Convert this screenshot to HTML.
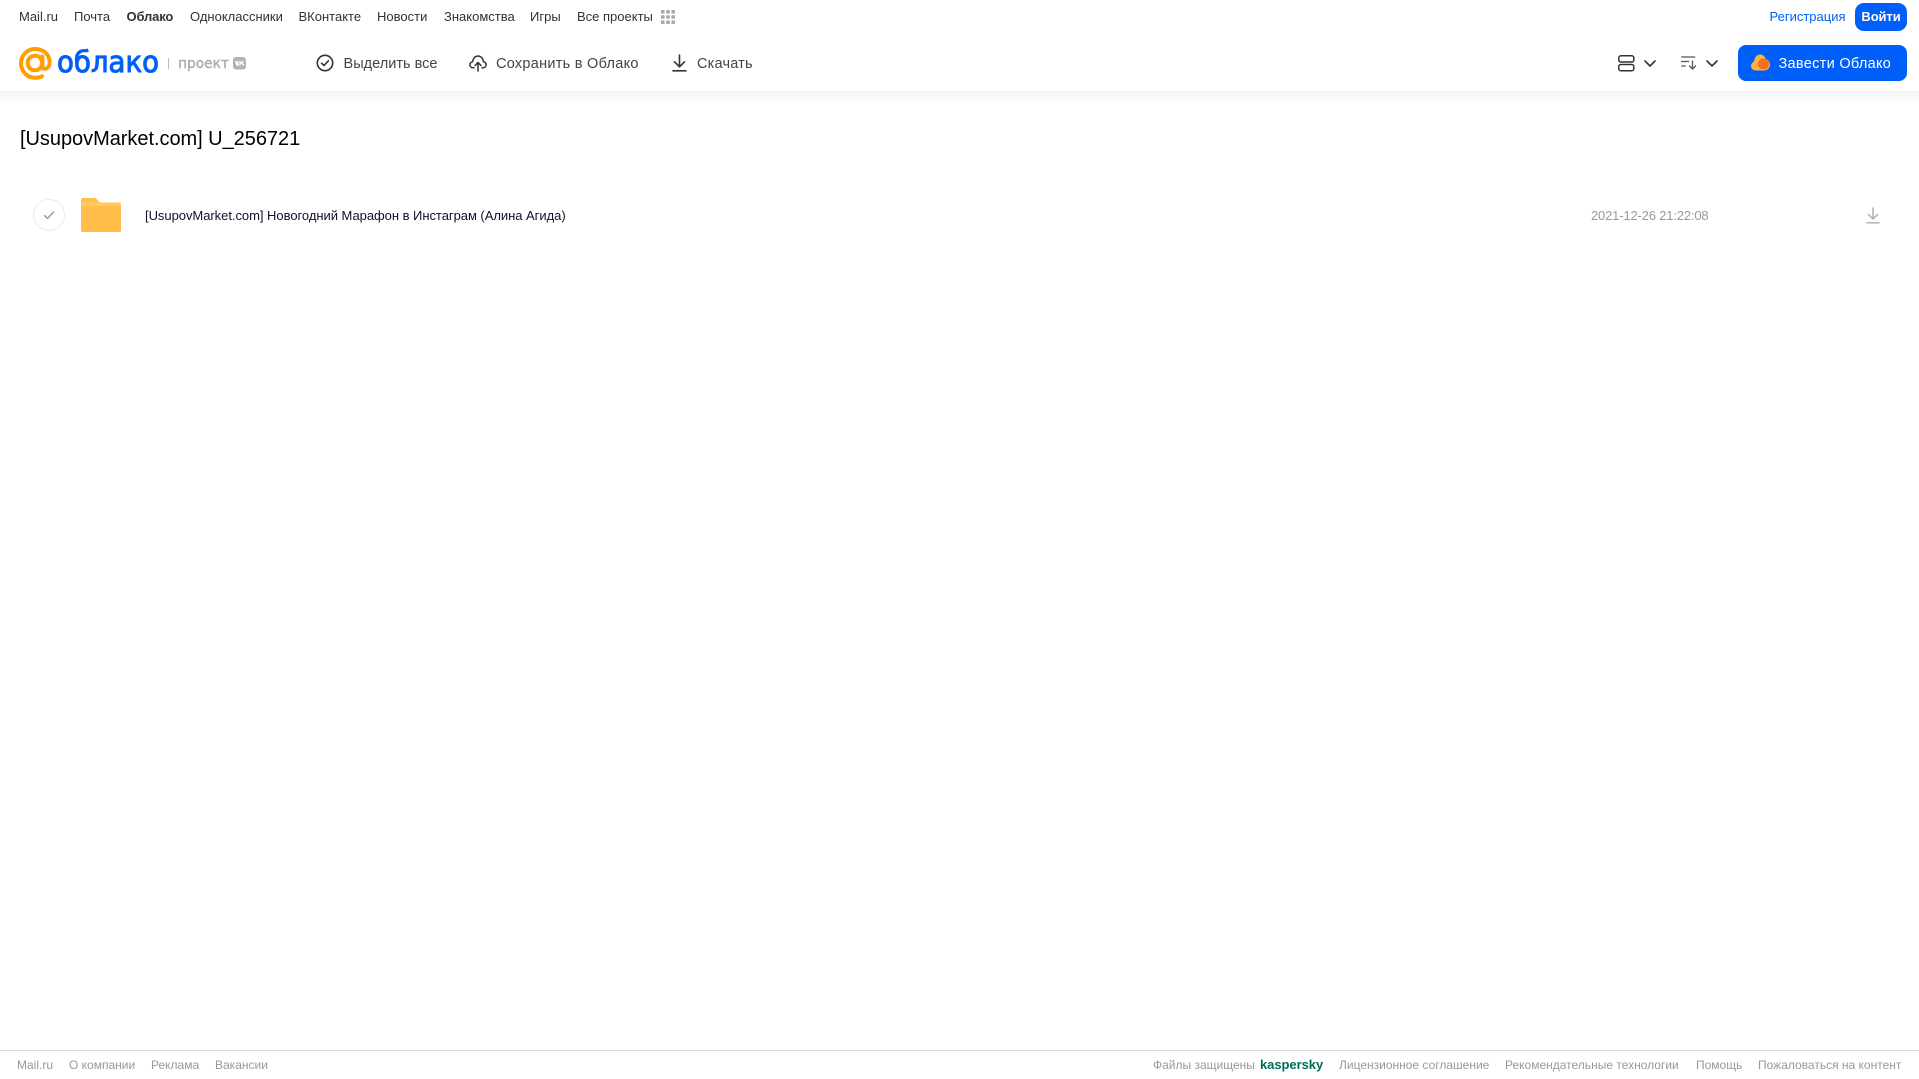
<!DOCTYPE html>
<html lang="ru">
<head>
<meta charset="utf-8">
<title>Облако</title>
<style>
html,body{margin:0;padding:0;background:#fff;width:1919px;height:1079px;overflow:hidden;font-family:"Liberation Sans",sans-serif}
.t{position:absolute;white-space:nowrap;line-height:16px}
.n{font-size:13px;color:#333;top:9px}
.b{font-size:14.5px;color:#444;top:56px}
.f{font-size:12px;color:#999;top:1057px}
svg{position:absolute;display:block;overflow:visible}
#shadow{position:absolute;left:0;top:91px;width:1919px;height:14px;background:linear-gradient(#f3f3f3,#fff)}
</style>
</head>
<body>
<div id="shadow"></div>
<span class="t n" style="left:19px">Mail.ru</span>
<span class="t n" style="left:74px">Почта</span>
<span class="t n" style="left:126.500px;font-weight:bold;letter-spacing:-.15px">Облако</span>
<span class="t n" style="left:190px">Одноклассники</span>
<span class="t n" style="left:298.500px">ВКонтакте</span>
<span class="t n" style="left:377px">Новости</span>
<span class="t n" style="left:444px">Знакомства</span>
<span class="t n" style="left:530px">Игры</span>
<span class="t n" style="left:577px">Все проекты</span>
<svg style="left:661px;top:10px" width="14" height="14" fill="#aaa"><rect x="0" y="0" width="3.6" height="3.6" rx=".8"/><rect x="5.2" y="0" width="3.6" height="3.6" rx=".8"/><rect x="10.4" y="0" width="3.6" height="3.6" rx=".8"/><rect x="0" y="5.2" width="3.6" height="3.6" rx=".8"/><rect x="5.2" y="5.2" width="3.6" height="3.6" rx=".8"/><rect x="10.4" y="5.2" width="3.6" height="3.6" rx=".8"/><rect x="0" y="10.4" width="3.6" height="3.6" rx=".8"/><rect x="5.2" y="10.4" width="3.6" height="3.6" rx=".8"/><rect x="10.4" y="10.4" width="3.6" height="3.6" rx=".8"/></svg>

<span class="t" style="left:1769.500px;top:9px;font-size:13px;color:#005ff9">Регистрация</span>
<div style="position:absolute;left:1855px;top:3px;width:52px;height:28px;border-radius:9px;background:#005ff9;color:#fff;font-size:13px;font-weight:bold;text-align:center;line-height:28px;letter-spacing:-.1px">Войти</div>

<!-- logo -->
<svg style="left:19px;top:47px" width="33" height="33" viewBox="0 0 33 33" fill="none"><circle cx="16" cy="16" r="7.300" stroke="#ff9e00" stroke-width="4"/><path d="M23.300 9.500v9.500c0 4.300 6.900 3.800 7.300-2.800C31 7.500 24.500 2 16 2 8.300 2 2 8.300 2 16.300S8.300 30.800 16 30.800c2.800 0 5-.5 7-1.600" stroke="#ff9e00" stroke-width="4" stroke-linecap="round"/></svg>
<svg style="left:0;top:0" width="300" height="90"><text x="57" y="72" font-family="DejaVu Sans" font-size="29" fill="#005ff9" stroke="#005ff9" stroke-width="1" textLength="102" lengthAdjust="spacingAndGlyphs">облако</text>
<rect x="168" y="58" width="1" height="11" fill="#bbb"/>
<text x="178" y="68" font-family="DejaVu Sans" font-size="14" fill="#adadad" stroke="#adadad" stroke-width=".4" textLength="51" lengthAdjust="spacingAndGlyphs">проект</text>
<rect x="233" y="57" width="13" height="12.500" rx="3" fill="#b3b3b3"/>
<path d="M235.500 61l1.600 4.200h1l-.6-4.200M243.700 61l-2.300 2 2.500 2.200M240 61v4.200" fill="none" stroke="#fff" stroke-width="1.300"/></svg>

<!-- toolbar -->
<svg style="left:316px;top:54px" width="18" height="18" viewBox="0 0 18 18" fill="none" stroke="#333" stroke-width="1.600"><circle cx="9" cy="9" r="7.700"/><path d="M5.600 9.200l2.400 2.300 4.400-4.700" stroke-linecap="round" stroke-linejoin="round"/></svg>
<span class="t b" style="left:343.500px;letter-spacing:.02px">Выделить все</span>
<svg style="left:469px;top:54px" width="18" height="18" viewBox="0 0 18 18" fill="none" stroke="#333" stroke-width="1.500" stroke-linecap="round" stroke-linejoin="round"><path d="M5 13.700H4C2 13.700 .9 12.300.9 10.700c0-1.600 1.200-2.800 2.700-3C4.100 4.200 6.300 2 9 2s5 2.200 5.400 5.700c1.500.2 2.700 1.400 2.700 3 0 1.600-1.100 3-3.100 3h-1"/><path d="M9 17V9M6 11.500L9 8.500l3 3"/></svg>
<span class="t b" style="left:496px;letter-spacing:.27px">Сохранить в Облако</span>
<svg style="left:671.500px;top:54px" width="15" height="18" viewBox="0 0 15 18" fill="none" stroke="#333" stroke-width="1.600" stroke-linecap="round" stroke-linejoin="round"><path d="M7.500 1v11.500M2.500 7.800l5 5 5-5M1 16.800h13"/></svg>
<span class="t b" style="left:697px;letter-spacing:.2px">Скачать</span>

<!-- right controls -->
<svg style="left:1618px;top:55px" width="17" height="17" viewBox="0 0 17 17" fill="none" stroke="#333" stroke-width="1.500"><rect x=".8" y=".8" width="15" height="6.200" rx="2"/><rect x=".8" y="9.500" width="15" height="6.200" rx="2"/></svg>
<svg style="left:1644px;top:60px" width="12" height="7" viewBox="0 0 12 7" fill="none" stroke="#333" stroke-width="1.600" stroke-linecap="round" stroke-linejoin="round"><path d="M1 1l5 5 5-5"/></svg>
<svg style="left:1681px;top:56px" width="16" height="14" viewBox="0 0 16 14" fill="none" stroke="#555" stroke-width="1.300" stroke-linecap="round" stroke-linejoin="round"><path d="M.7 1h13M.7 5.500h7M.7 10h3.500M11.500 5v8M8.500 10l3 3 3-3"/></svg>
<svg style="left:1706px;top:60px" width="12" height="7" viewBox="0 0 12 7" fill="none" stroke="#333" stroke-width="1.600" stroke-linecap="round" stroke-linejoin="round"><path d="M1 1l5 5 5-5"/></svg>
<div style="position:absolute;left:1738px;top:45px;width:169px;height:36px;border-radius:8px;background:#005ff9"></div>
<svg style="left:1750.500px;top:54px" width="19" height="17" viewBox="0 0 19 17"><path d="M5 16.500C2 16.500 0 14.500 0 12c0-2 1.200-3.500 3-4.200C3.400 3.500 6 .5 9 .5c3 0 5 2 5.700 4.500C17.300 5.800 19 8 19 10.500c0 3.300-2.500 6-6 6z" fill="#ffb13d"/><circle cx="12.500" cy="10" r="5.500" fill="#f5701e"/></svg>
<span class="t" style="left:1778.500px;top:56px;font-size:14.500px;color:#fff;letter-spacing:.3px">Завести Облако</span>

<!-- title -->
<span class="t" style="left:20px;top:127px;line-height:24px;font-size:20px;color:#000;letter-spacing:-.04px">[UsupovMarket.com] U_256721</span>

<!-- row -->
<svg style="left:33px;top:199px" width="32" height="32" viewBox="0 0 32 32" fill="none"><circle cx="16" cy="16" r="15.500" stroke="#ececec"/><path d="M11.500 16.500l3 3 6-6.500" stroke="#999" stroke-width="1.400" stroke-linecap="round" stroke-linejoin="round"/></svg>
<svg style="left:81px;top:198px" width="40" height="34" viewBox="0 0 40 34"><path d="M2 0h11c2 0 3 1 4 2.500 1 1.500 2 2 3.500 2H38c1.200 0 2 .8 2 2V32c0 1.200-.8 2-2 2H2c-1.200 0-2-.8-2-2V2C0 .8.800 0 2 0z" fill="#ffc04d"/><rect y="8" width="40" height="26" rx="2" fill="#ffbe4a"/><rect y="4.500" width="40" height="3.500" fill="#ffd070" opacity=".6"/></svg>
<span class="t" style="left:145px;top:208px;font-size:13px;color:#1a0a2e;letter-spacing:-.04px">[UsupovMarket.com] Новогодний Марафон в Инстаграм (Алина Агида)</span>
<span class="t" style="left:1591px;top:208px;font-size:13px;color:#999;letter-spacing:-.17px">2021-12-26 21:22:08</span>
<svg style="left:1866px;top:207px" width="14" height="17" viewBox="0 0 14 17" fill="none" stroke="#aaa" stroke-width="1.400" stroke-linecap="round" stroke-linejoin="round"><path d="M7 1v10.500M2.500 7.500l4.500 4.500 4.500-4.500M1 15.800h12"/></svg>

<!-- footer -->
<div style="position:absolute;left:0;top:1050px;width:1919px;height:1px;background:#d9d9d9"></div>
<span class="t f" style="left:17px">Mail.ru</span>
<span class="t f" style="left:69px">О компании</span>
<span class="t f" style="left:151px">Реклама</span>
<span class="t f" style="left:215px">Вакансии</span>
<span class="t f" style="left:1153px">Файлы защищены</span>
<span class="t f" style="left:1260px;font-size:13px;font-weight:bold;color:#006d5c;letter-spacing:-.05px">kaspersky</span>
<span class="t f" style="left:1339px">Лицензионное соглашение</span>
<span class="t f" style="left:1505px">Рекомендательные технологии</span>
<span class="t f" style="left:1696px">Помощь</span>
<span class="t f" style="left:1758px">Пожаловаться на контент</span>
</body>
</html>
